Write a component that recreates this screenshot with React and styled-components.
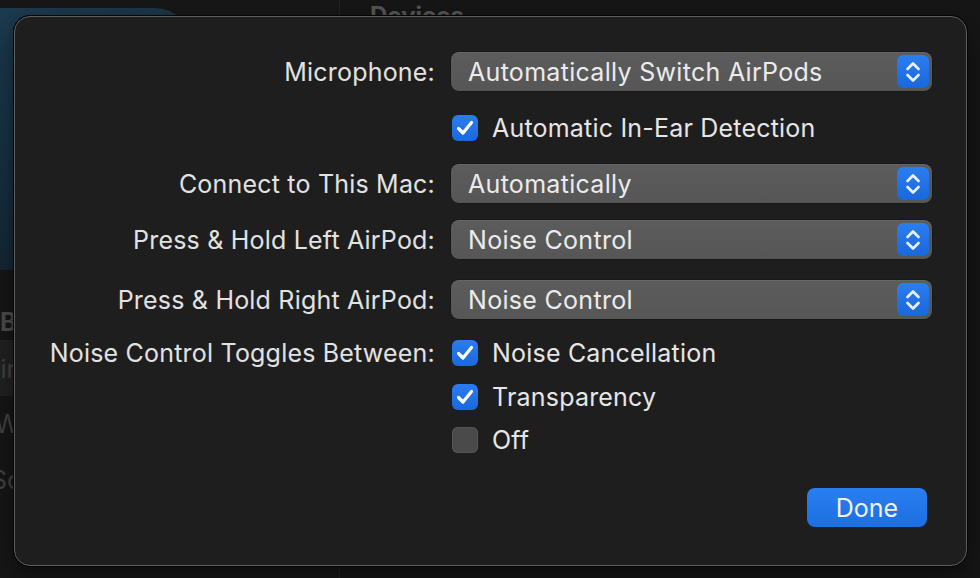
import React from "react";
import styled, { createGlobalStyle } from "styled-components";

const Global = createGlobalStyle`
  html, body { margin: 0; padding: 0; background: #161616; }
  body { font-family: Inter, "Noto Sans", "Liberation Sans", sans-serif; -webkit-font-smoothing: antialiased; }
  * { box-sizing: border-box; }
`;

const Screen = styled.div`
  position: relative;
  width: 980px;
  height: 578px;
  overflow: hidden;
  display: flex;
  background: #161616;
`;

const Sidebar = styled.div`
  width: 340px;
  flex: none;
  display: flex;
  flex-direction: column;
  border-right: 1px solid #232323;
  background: #171717;
`;

const DeviceCard = styled.div`
  margin: 8px 0 0 -20px;
  width: 214px;
  height: 262px;
  border-radius: 0 40px 22px 0;
  background: linear-gradient(160deg, #1d3c50 0%, #17303f 55%, #13222d 100%);
`;

const SideHeading = styled.div`
  margin-top: 34px;
  height: 36px;
  color: #4e4e4e;
  font-weight: 700;
  font-size: 25px;
  line-height: 36px;
`;

const SideItem = styled.div`
  height: 56px;
  display: flex;
  align-items: center;
  font-size: 25px;
  color: #444;
  background: ${(p) => (p.$selected ? "#222" : "transparent")};
  border-top: ${(p) => (p.$selected ? "1px solid #262626" : "none")};
  margin-left: ${(p) => p.$shift}px;
`;

const Main = styled.div`
  flex: 1;
  padding-left: 30px;
`;

const MainTitle = styled.div`
  margin-top: 2px;
  font-size: 24px;
  font-weight: 700;
  color: #565656;
  line-height: 28px;
`;

const Dialog = styled.div`
  position: absolute;
  left: 14px;
  top: 16px;
  width: 953px;
  height: 550px;
  background: #1e1e1e;
  border: 1px solid #5e5e5e;
  border-radius: 16px;
  box-shadow: 0 0 0 1px #050505, 0 10px 30px rgba(0, 0, 0, 0.5);
  padding: 35px 34px 0 0;
  display: flex;
  flex-direction: column;
`;

const Row = styled.div`
  display: grid;
  grid-template-columns: 1fr 481px;
  column-gap: 16px;
  align-items: center;
  height: ${(p) => p.$h}px;
  margin-top: ${(p) => p.$mt || 0}px;
`;

const Label = styled.div`
  text-align: right;
  color: #e2e2e2;
  font-size: 25px;
  letter-spacing: 0.2px;
  white-space: nowrap;
`;

const Select = styled.div`
  height: 39px;
  border-radius: 8px;
  background: linear-gradient(#5c5c5c, #565656);
  box-shadow: inset 0 1px 0 rgba(255, 255, 255, 0.06), 0 0 0 0.5px rgba(0, 0, 0, 0.4);
  display: flex;
  align-items: center;
  justify-content: space-between;
  padding: 0 3px 0 17px;
  color: #ebebeb;
  font-size: 25px;
  letter-spacing: 0.3px;
`;

const Stepper = styled.div`
  width: 32px;
  height: 33px;
  border-radius: 6px;
  background: linear-gradient(#2b7df0, #1a68da);
  display: flex;
  align-items: center;
  justify-content: center;
`;

const CheckRow = styled.div`
  grid-column: 2;
  display: flex;
  align-items: center;
  gap: 14px;
  color: #e6e6e6;
  font-size: 25px;
  letter-spacing: 0.2px;
`;

const Box = styled.div`
  width: 26px;
  height: 26px;
  margin-left: 1px;
  border-radius: 6px;
  display: flex;
  align-items: center;
  justify-content: center;
  background: ${(p) => (p.$on ? "linear-gradient(#2a7cf0, #1b69dc)" : "#4a4a4a")};
  box-shadow: ${(p) => (p.$on ? "none" : "inset 0 0 0 1px #555")};
`;

const Footer = styled.div`
  display: flex;
  justify-content: flex-end;
  margin-top: 30px;
  padding-right: 5px;
`;

const DoneButton = styled.button`
  width: 120px;
  height: 39px;
  border: none;
  border-radius: 8px;
  background: linear-gradient(#2a7eef, #1b6fe0);
  color: #f2f2f2;
  font-family: inherit;
  font-size: 25px;
  padding: 0;
`;

const Chevrons = () => (
  <svg width="18" height="26" viewBox="0 0 18 26" fill="none">
    <path d="M3.5 10 L9 4.5 L14.5 10" stroke="#e8f0fb" strokeWidth="2.7" strokeLinecap="round" strokeLinejoin="round" />
    <path d="M3.5 16 L9 21.5 L14.5 16" stroke="#e8f0fb" strokeWidth="2.7" strokeLinecap="round" strokeLinejoin="round" />
  </svg>
);

const Check = () => (
  <svg width="22" height="22" viewBox="0 0 22 22" fill="none">
    <path d="M4.5 11.5 L9 16 L17.5 5.5" stroke="#fff" strokeWidth="3.2" strokeLinecap="round" strokeLinejoin="round" />
  </svg>
);

const SelectRow = ({ label, value, mt }) => (
  <Row $h={39} $mt={mt}>
    <Label>{label}</Label>
    <Select>
      <span>{value}</span>
      <Stepper>
        <Chevrons />
      </Stepper>
    </Select>
  </Row>
);

const CheckboxRow = ({ label, text, on, mt }) => (
  <Row $h={36} $mt={mt}>
    {label ? <Label>{label}</Label> : <span />}
    <CheckRow>
      <Box $on={on}>{on && <Check />}</Box>
      <span>{text}</span>
    </CheckRow>
  </Row>
);

export default function App() {
  return (
    <>
      <Global />
      <Screen>
        <Sidebar>
          <DeviceCard />
          <SideHeading>Bluetooth</SideHeading>
          <SideItem $selected $shift={-17}>AirPods</SideItem>
          <SideItem $shift={-5}>Wi-Fi</SideItem>
          <SideItem $shift={-9}>Sound</SideItem>
        </Sidebar>
        <Main>
          <MainTitle>Devices</MainTitle>
        </Main>
        <Dialog>
          <SelectRow label="Microphone:" value="Automatically Switch AirPods" />
          <CheckboxRow text="Automatic In-Ear Detection" on mt={19} />
          <SelectRow label="Connect to This Mac:" value="Automatically" mt={18} />
          <SelectRow label="Press & Hold Left AirPod:" value="Noise Control" mt={17} />
          <SelectRow label="Press & Hold Right AirPod:" value="Noise Control" mt={21} />
          <CheckboxRow label="Noise Control Toggles Between:" text="Noise Cancellation" on mt={16} />
          <CheckboxRow text="Transparency" on mt={8} />
          <CheckboxRow text="Off" mt={7} />
          <Footer>
            <DoneButton>Done</DoneButton>
          </Footer>
        </Dialog>
      </Screen>
    </>
  );
}
